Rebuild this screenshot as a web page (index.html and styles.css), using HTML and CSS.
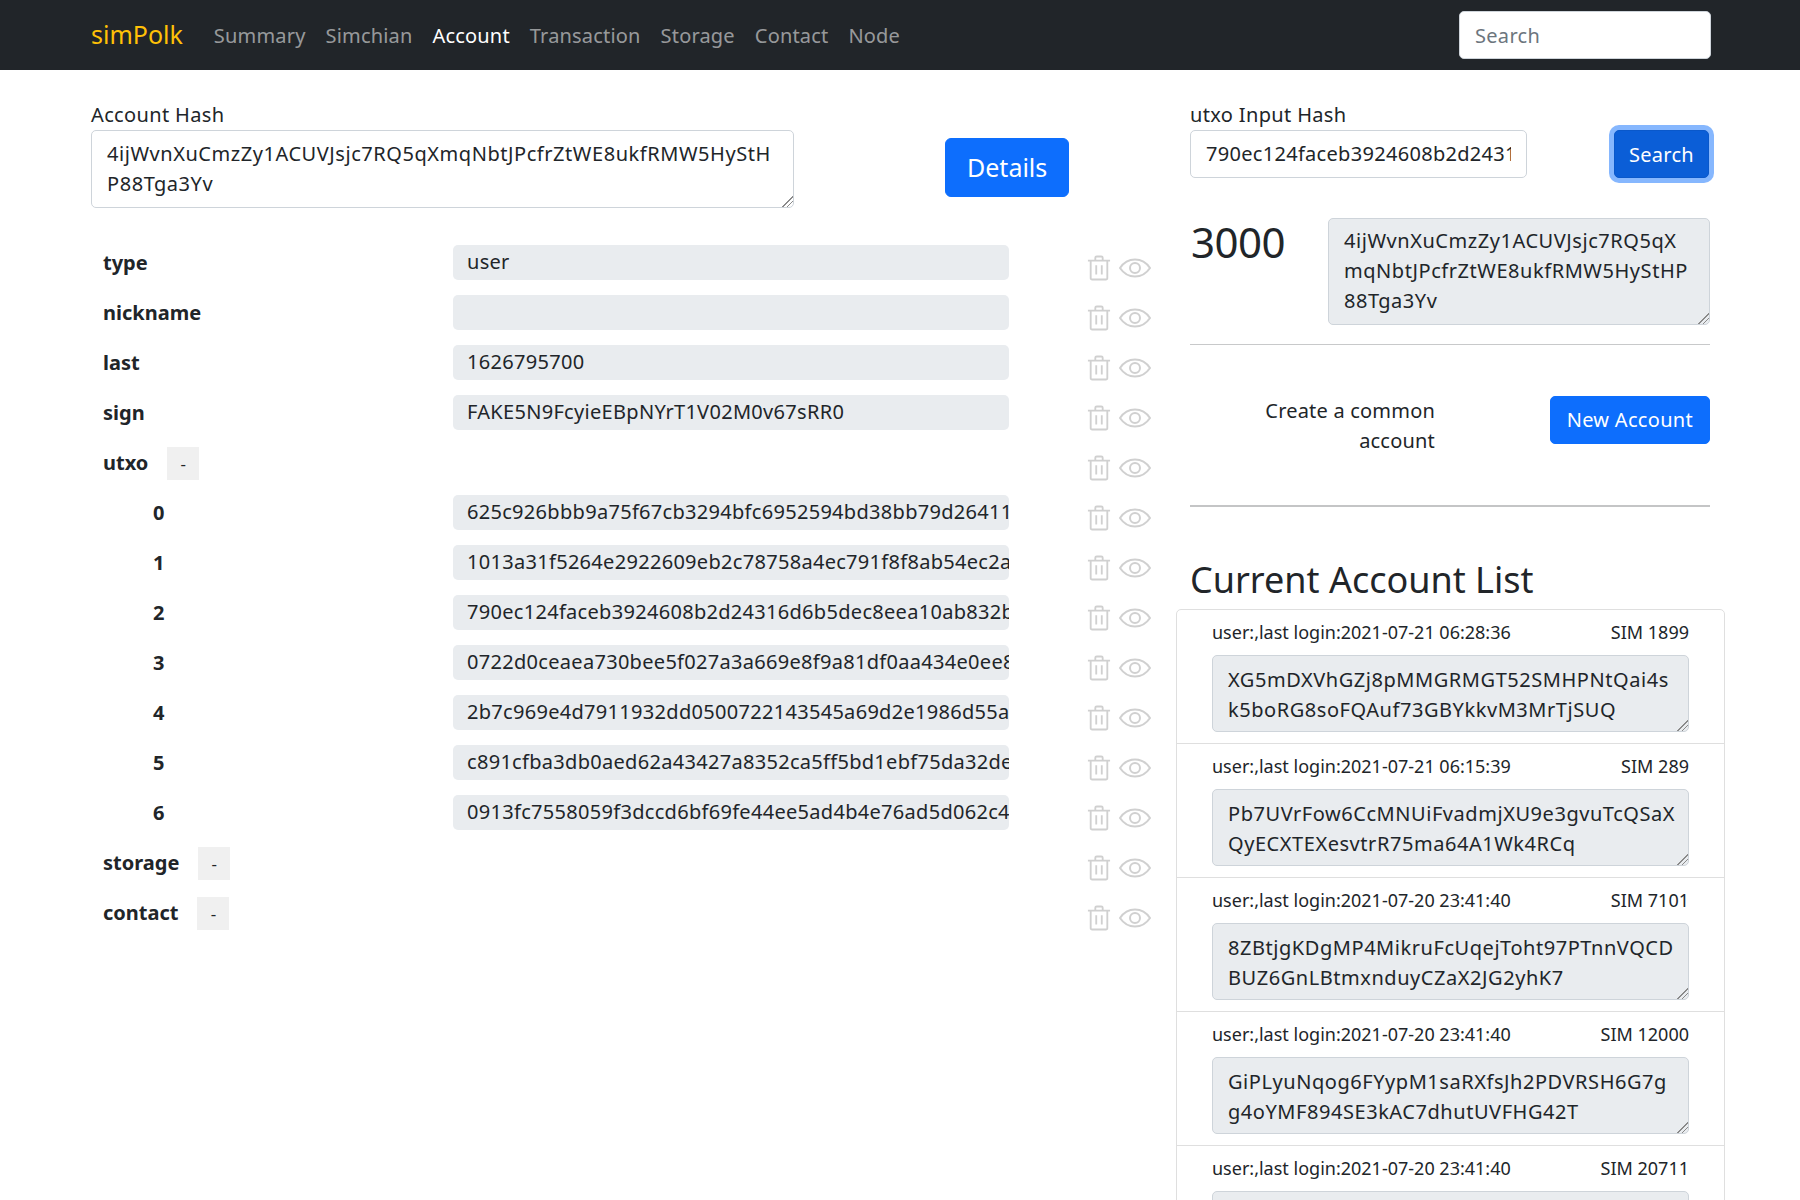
FILE: index.html
```html
<!DOCTYPE html>
<html lang="en">
<head>
    <meta charset="UTF-8">
    <title>simPolk</title>
    <link rel="stylesheet" href="styles.css">
</head>
<body>
    <svg class="icon-defs" width="0" height="0">
        <symbol id="trash" viewBox="0 0 26 28">
            <path d="M1 6h24M9 6V3a1.5 1.5 0 0 1 1.5-1.500h5A1.500 1.500 0 0 1 17 3v3M4 6v19a1.500 1.500 0 0 0 1.500 1.500h15A1.500 1.500 0 0 0 22 25V6M10 11v10M16 11v10"/>
        </symbol>
        <symbol id="eye" viewBox="0 0 32 20">
            <path d="M1 10C5 4 10 1.500 16 1.500S27 4 31 10c-4 6-9 8.500-15 8.500S5 16 1 10z"/>
            <circle cx="16" cy="10" r="5"/>
        </symbol>
    </svg>

    <nav class="navbar">
        <a class="brand" href="#">simPolk</a>
        <a class="nav-link" href="#">Summary</a>
        <a class="nav-link" href="#">Simchian</a>
        <a class="nav-link active" href="#">Account</a>
        <a class="nav-link" href="#">Transaction</a>
        <a class="nav-link" href="#">Storage</a>
        <a class="nav-link" href="#">Contact</a>
        <a class="nav-link" href="#">Node</a>
        <input class="form-control nav-search" type="text" placeholder="Search">
    </nav>

    <div class="page">
        <!-- left side: account details -->
        <div class="left">
            <div class="hash-row">
                <div class="hash-field">
                    <label>Account Hash</label>
                    <textarea class="form-control hash-text" rows="2">4ijWvnXuCmzZy1ACUVJsjc7RQ5qXmqNbtJPcfrZtWE8ukfRMW5HyStH
P88Tga3Yv</textarea>
                </div>
                <button class="btn btn-lg">Details</button>
            </div>

            <div class="rows">
                <div class="row">
                    <div class="key">type</div>
                    <input class="val" type="text" readonly value="user">
                    <div class="icons"><svg class="ic-trash"><use href="#trash"/></svg><svg class="ic-eye"><use href="#eye"/></svg></div>
                </div>
                <div class="row">
                    <div class="key">nickname</div>
                    <input class="val" type="text" readonly value="">
                    <div class="icons"><svg class="ic-trash"><use href="#trash"/></svg><svg class="ic-eye"><use href="#eye"/></svg></div>
                </div>
                <div class="row">
                    <div class="key">last</div>
                    <input class="val" type="text" readonly value="1626795700">
                    <div class="icons"><svg class="ic-trash"><use href="#trash"/></svg><svg class="ic-eye"><use href="#eye"/></svg></div>
                </div>
                <div class="row">
                    <div class="key">sign</div>
                    <input class="val" type="text" readonly value="FAKE5N9FcyieEBpNYrT1V02M0v67sRR0">
                    <div class="icons"><svg class="ic-trash"><use href="#trash"/></svg><svg class="ic-eye"><use href="#eye"/></svg></div>
                </div>
                <div class="row">
                    <div class="key">utxo<span class="toggle">-</span></div>
                    <div></div>
                    <div class="icons"><svg class="ic-trash"><use href="#trash"/></svg><svg class="ic-eye"><use href="#eye"/></svg></div>
                </div>
                <div class="row">
                    <div class="key child">0</div>
                    <input class="val" type="text" readonly value="625c926bbb9a75f67cb3294bfc6952594bd38bb79d26411a">
                    <div class="icons"><svg class="ic-trash"><use href="#trash"/></svg><svg class="ic-eye"><use href="#eye"/></svg></div>
                </div>
                <div class="row">
                    <div class="key child">1</div>
                    <input class="val" type="text" readonly value="1013a31f5264e2922609eb2c78758a4ec791f8f8ab54ec2a">
                    <div class="icons"><svg class="ic-trash"><use href="#trash"/></svg><svg class="ic-eye"><use href="#eye"/></svg></div>
                </div>
                <div class="row">
                    <div class="key child">2</div>
                    <input class="val" type="text" readonly value="790ec124faceb3924608b2d24316d6b5dec8eea10ab832b1">
                    <div class="icons"><svg class="ic-trash"><use href="#trash"/></svg><svg class="ic-eye"><use href="#eye"/></svg></div>
                </div>
                <div class="row">
                    <div class="key child">3</div>
                    <input class="val" type="text" readonly value="0722d0ceaea730bee5f027a3a669e8f9a81df0aa434e0ee8">
                    <div class="icons"><svg class="ic-trash"><use href="#trash"/></svg><svg class="ic-eye"><use href="#eye"/></svg></div>
                </div>
                <div class="row">
                    <div class="key child">4</div>
                    <input class="val" type="text" readonly value="2b7c969e4d7911932dd0500722143545a69d2e1986d55a">
                    <div class="icons"><svg class="ic-trash"><use href="#trash"/></svg><svg class="ic-eye"><use href="#eye"/></svg></div>
                </div>
                <div class="row">
                    <div class="key child">5</div>
                    <input class="val" type="text" readonly value="c891cfba3db0aed62a43427a8352ca5ff5bd1ebf75da32de">
                    <div class="icons"><svg class="ic-trash"><use href="#trash"/></svg><svg class="ic-eye"><use href="#eye"/></svg></div>
                </div>
                <div class="row">
                    <div class="key child">6</div>
                    <input class="val" type="text" readonly value="0913fc7558059f3dccd6bf69fe44ee5ad4b4e76ad5d062c4">
                    <div class="icons"><svg class="ic-trash"><use href="#trash"/></svg><svg class="ic-eye"><use href="#eye"/></svg></div>
                </div>
                <div class="row">
                    <div class="key">storage<span class="toggle">-</span></div>
                    <div></div>
                    <div class="icons"><svg class="ic-trash"><use href="#trash"/></svg><svg class="ic-eye"><use href="#eye"/></svg></div>
                </div>
                <div class="row">
                    <div class="key">contact<span class="toggle">-</span></div>
                    <div></div>
                    <div class="icons"><svg class="ic-trash"><use href="#trash"/></svg><svg class="ic-eye"><use href="#eye"/></svg></div>
                </div>
            </div>
        </div>

        <!-- right side: utxo lookup and account list -->
        <div class="right">
            <div class="utxo-row">
                <div class="utxo-field">
                    <label>utxo Input Hash</label>
                    <input class="form-control" type="text" value="790ec124faceb3924608b2d24316d6b5dec8eea10ab832b1">
                </div>
                <button class="btn btn-focus">Search</button>
            </div>

            <div class="balance-row">
                <div class="balance">3000</div>
                <textarea class="form-control muted balance-hash" rows="3">4ijWvnXuCmzZy1ACUVJsjc7RQ5qX
mqNbtJPcfrZtWE8ukfRMW5HyStHP
88Tga3Yv</textarea>
            </div>

            <hr class="line-one">

            <div class="create-row">
                <div class="create-text">Create a common<br>account</div>
                <button class="btn">New Account</button>
            </div>

            <hr class="line-two">

            <h3 class="list-title">Current Account List</h3>
            <div class="list">
                <div class="item">
                    <div class="item-head"><span>user:,last login:2021-07-21 06:28:36</span><span>SIM 1899</span></div>
                    <textarea class="form-control muted" rows="2">XG5mDXVhGZj8pMMGRMGT52SMHPNtQai4s
k5boRG8soFQAuf73GBYkkvM3MrTjSUQ</textarea>
                </div>
                <div class="item">
                    <div class="item-head"><span>user:,last login:2021-07-21 06:15:39</span><span>SIM 289</span></div>
                    <textarea class="form-control muted" rows="2">Pb7UVrFow6CcMNUiFvadmjXU9e3gvuTcQSaX
QyECXTEXesvtrR75ma64A1Wk4RCq</textarea>
                </div>
                <div class="item">
                    <div class="item-head"><span>user:,last login:2021-07-20 23:41:40</span><span>SIM 7101</span></div>
                    <textarea class="form-control muted" rows="2">8ZBtjgKDgMP4MikruFcUqejToht97PTnnVQCD
BUZ6GnLBtmxnduyCZaX2JG2yhK7</textarea>
                </div>
                <div class="item">
                    <div class="item-head"><span>user:,last login:2021-07-20 23:41:40</span><span>SIM 12000</span></div>
                    <textarea class="form-control muted" rows="2">GiPLyuNqog6FYypM1saRXfsJh2PDVRSH6G7g
g4oYMF894SE3kAC7dhutUVFHG42T</textarea>
                </div>
                <div class="item">
                    <div class="item-head"><span>user:,last login:2021-07-20 23:41:40</span><span>SIM 20711</span></div>
                    <textarea class="form-control muted" rows="2"></textarea>
                </div>
            </div>
        </div>
    </div>
</body>
</html>
```

FILE: styles.css
```css
html, body {
    margin: 0;
    height: 100%;
    overflow: hidden;
}
body {
    font-family: "Noto Sans", "Open Sans", sans-serif;
    font-size: 20px;
    line-height: 1.5;
    color: #212529;
    background-color: #fff;
}
.icon-defs {
    position: absolute;
}
.navbar {
    display: flex;
    align-items: center;
    height: 70px;
    padding: 0 89px 0 91px;
    background-color: #212529;
}
.brand {
    font-size: 25px;
    color: #ffc107;
    text-decoration: none;
    margin-right: 21px;
}
.nav-link {
    margin-top: 2px;
    padding: 0 10px;
    color: rgba(255, 255, 255, 0.55);
    letter-spacing: 0.18px;
    text-decoration: none;
}
.nav-link.active {
    color: #fff;
}
.form-control {
    display: block;
    box-sizing: border-box;
    width: 100%;
    padding: 8px 15px;
    font-family: inherit;
    font-size: 20px;
    line-height: 30px;
    letter-spacing: 0.3px;
    color: #212529;
    background-color: #fff;
    border: 1px solid #ced4da;
    border-radius: 5px;
    outline: none;
}
.form-control::placeholder {
    color: #6c757d;
}
textarea.form-control {
    resize: vertical;
    overflow: hidden;
    white-space: pre;
    letter-spacing: 0.55px;
}
textarea.form-control::-webkit-resizer {
    background: linear-gradient(135deg, transparent 62%, #8a8a8a 62%, #8a8a8a 67%, transparent 67%, transparent 78%, #8a8a8a 78%, #8a8a8a 83%, transparent 83%);
}
.form-control.muted {
    background-color: #e9ecef;
}
.nav-search {
    width: 252px;
    height: 48px;
    margin-left: auto;
}
.page {
    display: grid;
    grid-template-columns: 1099px 520px;
    padding: 30px 90px 0 91px;
}
label {
    display: block;
    letter-spacing: 0.35px;
}
.hash-row {
    display: flex;
    align-items: flex-start;
}
.hash-field {
    width: 703px;
}
.btn {
    padding: 8px 16px;
    font-family: inherit;
    font-size: 20px;
    line-height: 30px;
    letter-spacing: 0.3px;
    color: #fff;
    background-color: #0d6efd;
    border: 1px solid #0d6efd;
    border-radius: 5px;
}
.btn-lg {
    margin: 38px 0 0 151px;
    padding: 10px 21px;
    font-size: 25px;
    line-height: 37px;
    letter-spacing: 0;
    border-radius: 6px;
}
.btn-focus {
    margin: 30px 1px 0 auto;
    padding: 9px 14px 7px;
    background-color: #0b5ed7;
    border-color: #0a58ca;
    box-shadow: 0 0 0 5px #86b7fe;
}
.rows {
    margin-top: 29px;
}
.row {
    display: grid;
    grid-template-columns: 362px 556px 1fr;
    align-items: center;
    height: 50px;
}
.key {
    display: flex;
    align-items: center;
    margin-top: 2px;
    padding-left: 12px;
    font-weight: 700;
}
.key.child {
    padding-left: 62px;
}
.toggle {
    width: 32px;
    height: 33px;
    margin-left: 19px;
    font-weight: 400;
    font-size: 17px;
    line-height: 33px;
    text-align: center;
    background-color: #f0f0f0;
}
.val {
    box-sizing: border-box;
    width: 100%;
    height: 35px;
    padding: 0 0 2px 14px;
    font-family: inherit;
    font-size: 20px;
    letter-spacing: 0.3px;
    color: #212529;
    background-color: #e9ecef;
    border: none;
    border-radius: 5px;
    outline: none;
}
.icons {
    display: flex;
    align-items: center;
    gap: 8px;
    margin: 12px 0 0 78px;
}
.icons svg {
    fill: none;
    stroke: #d0d0d0;
    stroke-width: 2;
}
.ic-trash {
    width: 24px;
    height: 26px;
}
.ic-eye {
    width: 32px;
    height: 20px;
}
.utxo-row {
    display: flex;
}
.utxo-field {
    width: 337px;
}
.balance-row {
    display: flex;
    align-items: flex-start;
    margin-top: 40px;
}
.balance {
    width: 137px;
    margin-left: 1px;
    font-size: 42px;
    letter-spacing: -0.5px;
    line-height: 48px;
}
.balance-hash {
    width: 382px;
    padding-top: 7px;
    padding-bottom: 8px;
}
.line-one {
    margin: 19px 0 0;
    border: none;
    border-top: 1px solid #c8c9ca;
}
.create-row {
    display: flex;
    align-items: flex-start;
    justify-content: space-between;
    margin-top: 51px;
}
.create-text {
    width: 245px;
    letter-spacing: 0.2px;
    text-align: right;
}
.line-two {
    margin: 49px 0 0;
    border: none;
    border-top: 2px solid #c4c5c6;
}
.list-title {
    margin: 49px 0 0;
    font-size: 36px;
    font-weight: 400;
    line-height: 48px;
}
.list {
    box-sizing: border-box;
    width: 549px;
    margin: 5px 0 0 -14px;
    border: 1px solid #dfdfdf;
    border-radius: 5px;
}
.item {
    box-sizing: border-box;
    height: 134px;
    padding: 9px 35px 0;
    border-bottom: 1px solid #dfdfdf;
}
.item .form-control {
    padding: 9px 15px 6px;
}
.item-head {
    display: flex;
    justify-content: space-between;
    height: 36px;
    font-size: 18px;
    line-height: 27px;
}
```
